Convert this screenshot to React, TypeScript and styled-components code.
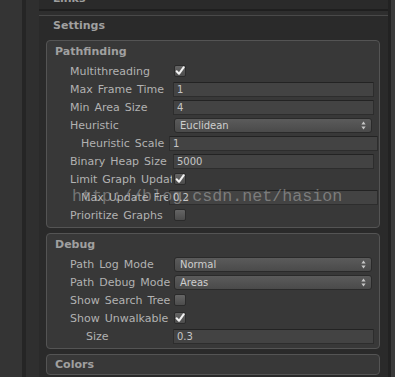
import styled, { createGlobalStyle } from "styled-components";

const Global = createGlobalStyle`
  html, body {
    margin: 0;
    padding: 0;
    background: #292929;
  }
  body {
    font-family: "DejaVu Sans", "Liberation Sans", sans-serif;
  }
`;

type RowSpec = {
  label: string;
  kind: "check" | "field" | "select";
  value?: string;
  checked?: boolean;
  indent?: number;
  labelWidth?: number;
  right?: number;
};

// pathfinding section rows, top to bottom
const pathRows: RowSpec[] = [
  { label: "Multithreading", kind: "check", checked: true },
  { label: "Max Frame Time", kind: "field", value: "1" },
  { label: "Min Area Size", kind: "field", value: "4" },
  { label: "Heuristic", kind: "select", value: "Euclidean" },
  { label: "Heuristic Scale", kind: "field", value: "1", indent: 34, labelWidth: 88, right: 1 },
  { label: "Binary Heap Size", kind: "field", value: "5000" },
  { label: "Limit Graph Updates", kind: "check", checked: true },
  { label: "Max Update Frequency", kind: "field", value: "0.2", indent: 34, labelWidth: 88, right: 1 },
  { label: "Prioritize Graphs", kind: "check", checked: false },
];

const debugRows: RowSpec[] = [
  { label: "Path Log Mode", kind: "select", value: "Normal" },
  { label: "Path Debug Mode", kind: "select", value: "Areas" },
  { label: "Show Search Tree", kind: "check", checked: false },
  { label: "Show Unwalkable Nodes", kind: "check", checked: true },
  { label: "Size", kind: "field", value: "0.3", indent: 39, labelWidth: 87 },
];

const Check = ({ on }: { on: boolean }) => (
  <CheckBox>
    {on && (
      <svg width="12" height="12" viewBox="0 0 12 12">
        <path
          d="M2.6 6.2 L5 8.8 L9.8 2.2"
          fill="none"
          stroke="#f2f2f2"
          strokeWidth="2"
          strokeLinecap="round"
          strokeLinejoin="round"
        />
      </svg>
    )}
  </CheckBox>
);

const Arrows = () => (
  <svg width="5" height="9" viewBox="0 0 5 9">
    <path d="M2.5 0.5 L4.6 3.5 L0.4 3.5 Z" fill="#c8c8c8" />
    <path d="M2.5 8.5 L4.6 5.5 L0.4 5.5 Z" fill="#c8c8c8" />
  </svg>
);

const PropRow = ({ row }: { row: RowSpec }) => (
  <Row $indent={row.indent ?? 23} $right={row.right ?? 5}>
    <Label $width={row.labelWidth ?? 103}>{row.label}</Label>
    {row.kind === "check" && <Check on={!!row.checked} />}
    {row.kind === "field" && <Field>{row.value}</Field>}
    {row.kind === "select" && (
      <Select>
        <span>{row.value}</span>
        <Arrows />
      </Select>
    )}
  </Row>
);

const App = () => {
  return (
    <>
      <Global />
      <Page>
        <SideBar />
        <SideDivider />
        <Gutter />
        <Inspector>
          <LinksBar>
            <LinksLabel>Links</LinksLabel>
          </LinksBar>
          <Split />
          <SectionTitle>Settings</SectionTitle>
          <Group>
            <GroupHeader>Pathfinding</GroupHeader>
            {pathRows.map((r) => (
              <PropRow key={r.label} row={r} />
            ))}
          </Group>
          <Group>
            <GroupHeader>Debug</GroupHeader>
            {debugRows.map((r) => (
              <PropRow key={r.label} row={r} />
            ))}
          </Group>
          <Group $closed>
            <GroupHeader $closed>Colors</GroupHeader>
          </Group>
        </Inspector>
        <ScrollEdge />
        <ScrollTrack />
        <Watermark>http://blog.csdn.net/hasion</Watermark>
      </Page>
    </>
  );
};

const Page = styled.div`
  position: relative;
  display: flex;
  width: 395px;
  height: 377px;
  overflow: hidden;
  background: #292929;
`;

const SideBar = styled.div`
  width: 22px;
  background: #343434;
`;

const SideDivider = styled.div`
  width: 4px;
  background: #252525;
`;

const Gutter = styled.div`
  width: 13px;
  background: #2f2f2f;
`;

const Inspector = styled.div`
  flex: 1;
  display: flex;
  flex-direction: column;
  background: #2a2a2a;
`;

const LinksBar = styled.div`
  height: 9px;
  overflow: hidden;
  padding-left: 14px;
`;

const LinksLabel = styled.span`
  display: block;
  margin-top: -8px;
  line-height: 13px;
  font-size: 11px;
  font-weight: bold;
  color: #9e9e9e;
`;

const Split = styled.div`
  height: 4px;
  border-top: 2px solid #1f1f1f;
  border-bottom: 1px solid #494949;
  background: #2e2e2e;
`;

const SectionTitle = styled.div`
  height: 19px;
  line-height: 19px;
  padding-left: 14px;
  font-size: 11px;
  font-weight: bold;
  color: #a0a0a0;
`;

const Group = styled.div<{ $closed?: boolean }>`
  margin: 5px 8px 0 7px;
  padding-bottom: ${(p) => (p.$closed ? 0 : 3)}px;
  border: 1px solid #545454;
  border-radius: 4px;
  background: #383838;
`;

const GroupHeader = styled.div<{ $closed?: boolean }>`
  height: ${(p) => (p.$closed ? 19 : 21)}px;
  line-height: ${(p) => (p.$closed ? 19 : 21)}px;
  padding-left: 8px;
  font-size: 11px;
  font-weight: bold;
  color: #a0a0a0;
`;

const Row = styled.div<{ $indent: number; $right: number }>`
  display: flex;
  align-items: center;
  height: 18px;
  padding-left: ${(p) => p.$indent}px;
  padding-right: ${(p) => p.$right}px;
`;

const Label = styled.div<{ $width: number }>`
  flex: 0 0 ${(p) => p.$width - 1}px;
  margin-right: 1px;
  overflow: hidden;
  white-space: nowrap;
  font-size: 11px;
  word-spacing: 1.5px;
  color: #b2b2b2;
`;

const Field = styled.div`
  flex: 1;
  height: 13px;
  line-height: 13px;
  padding-left: 3px;
  border: 1px solid #2d2d2d;
  border-top-color: #232323;
  border-radius: 1px;
  background: #434343;
  font-size: 10px;
  color: #c6c6c6;
`;

const Select = styled.div`
  flex: 1;
  display: flex;
  align-items: center;
  justify-content: space-between;
  height: 13px;
  margin: 0 2px 0 1px;
  padding: 0 5px 0 5px;
  border: 1px solid #2a2a2a;
  border-radius: 3px;
  background: linear-gradient(#5b5b5b, #4a4a4a);
  font-size: 10px;
  color: #cecece;
`;

const CheckBox = styled.div`
  width: 10px;
  height: 10px;
  margin-left: 1px;
  border: 1px solid #2b2b2b;
  border-radius: 2px;
  background: linear-gradient(#656565, #4c4c4c);
  display: flex;
  align-items: center;
  justify-content: center;
  overflow: visible;
  svg {
    flex: none;
  }
`;

const ScrollEdge = styled.div`
  width: 3px;
  background: #222222;
`;

const ScrollTrack = styled.div`
  width: 4px;
  background: #3a3a3a;
`;

const Watermark = styled.div`
  position: absolute;
  left: 72px;
  top: 187px;
  font-family: "Liberation Mono", monospace;
  font-size: 16.7px;
  line-height: 20px;
  color: rgba(205, 205, 205, 0.42);
  white-space: nowrap;
  pointer-events: none;
`;

export default App;
